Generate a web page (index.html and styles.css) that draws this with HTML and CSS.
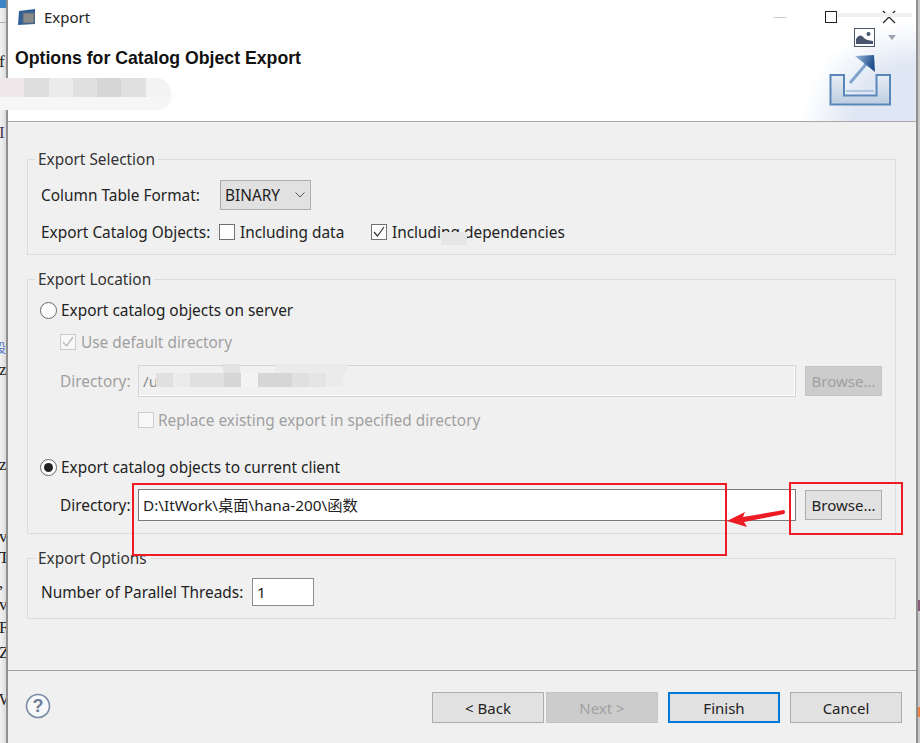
FILE: index.html
```html
<!DOCTYPE html>
<html lang="en">
<head>
    <meta charset="UTF-8">
    <meta name="viewport" content="width=device-width, initial-scale=1.0">
    <title>Export</title>
    <link rel="stylesheet" href="styles.css">
</head>
<body>
    <!-- Page behind the dialog, only a sliver is visible -->
    <div class="behind">
        <span class="scrap scrap-top"></span>
        <span class="scrap scrap-line"></span>
        <span class="glyph g1">f</span>
        <span class="glyph g2">I</span>
        <span class="glyph g12">设</span>
        <span class="glyph g3">z</span>
        <span class="glyph g4">z</span>
        <span class="glyph g5">v</span>
        <span class="glyph g6">T</span>
        <span class="glyph g7">,</span>
        <span class="glyph g8">v</span>
        <span class="glyph g9">F</span>
        <span class="glyph g10">Z</span>
        <span class="glyph g11">W</span>
    </div>

    <div class="dialog">
        <header class="banner">
            <div class="titlebar">
                <svg class="app-icon" width="18" height="18" viewBox="0 0 18 18">
                    <path d="M1 3 L17 1 V16 L0 17 Z" fill="#2f5f96"/>
                    <rect x="5" y="5" width="11" height="10" fill="#8a8a8a" stroke="#5d6a78"/>
                </svg>
                <span class="title-text">Export</span>
                <div class="win-controls">
                    <span class="win-min"></span>
                    <span class="win-max"></span>
                    <svg class="win-close" width="14" height="14" viewBox="0 0 14 14">
                        <path d="M1 1 L13 13 M13 1 L1 13" stroke="#222" stroke-width="1.2"/>
                    </svg>
                </div>
                <span class="win-blur"></span>
            </div>
            <h1 class="page-title">Options for Catalog Object Export</h1>
            <div class="banner-tools">
                <svg class="img-icon" width="21" height="19" viewBox="0 0 21 19">
                    <rect x="0.5" y="0.5" width="20" height="18" fill="#fff" stroke="#4a5568"/>
                    <path d="M2 16 V11 C5 6 8 7 10 10 C12 12 15 12 19 13 V16 Z" fill="#47566e"/>
                    <circle cx="14.5" cy="6" r="2" fill="#47566e"/>
                </svg>
                <span class="tool-arrow"></span>
            </div>
            <svg class="export-icon" width="62" height="52" viewBox="0 0 62 52">
                <defs>
                    <linearGradient id="headFill" x1="0" y1="0" x2="1" y2="0.3">
                        <stop offset="0" stop-color="#9dbbdc"/>
                        <stop offset="1" stop-color="#1f4f8c"/>
                    </linearGradient>
                    <linearGradient id="trayFill" x1="0" y1="0" x2="0" y2="1">
                        <stop offset="0" stop-color="#e8eef5"/>
                        <stop offset="1" stop-color="#bccde0"/>
                    </linearGradient>
                </defs>
                <path d="M1.5 20 H15 V40.5 H47.5 V20 H61 V49.5 H1.5 Z" fill="url(#trayFill)" stroke="#5a87ba" stroke-width="2"/>
                <path d="M17 36 H45" stroke="#7fa2c9" stroke-width="1"/>
                <path d="M21 28 L38 8" stroke="#7ea3cc" stroke-width="3"/>
                <path d="M26 1 L45 0 L46 17 Z" fill="url(#headFill)"/>
            </svg>
        </header>

        <main class="content">
            <fieldset class="group">
                <legend>Export Selection</legend>
                <div class="row row-format">
                    <span class="label label-format">Column Table Format:</span>
                    <div class="select">BINARY
                        <svg width="10" height="6" viewBox="0 0 10 6"><path d="M0.5 0.5 L5 5 L9.5 0.5" fill="none" stroke="#555"/></svg>
                    </div>
                </div>
                <div class="row row-objects">
                    <span class="label label-objects">Export Catalog Objects:</span>
                    <span class="check"></span>
                    <span class="check-text data-text">Including data</span>
                    <span class="check checked">
                        <svg width="14" height="14" viewBox="0 0 14 14"><path d="M2 7 L5.5 11 L12 2" fill="none" stroke="#333" stroke-width="1.2"/></svg>
                    </span>
                    <span class="check-text">Including dependencies</span>
                </div>
            </fieldset>

            <fieldset class="group">
                <legend>Export Location</legend>
                <div class="row row-radio1">
                    <span class="radio"></span>
                    <span class="radio-text">Export catalog objects on server</span>
                </div>
                <div class="row indent row-default muted">
                    <span class="check check-off">
                        <svg width="14" height="14" viewBox="0 0 14 14"><path d="M2 7 L5.5 11 L12 2" fill="none" stroke="#bbb" stroke-width="1.4"/></svg>
                    </span>
                    <span class="check-text">Use default directory</span>
                </div>
                <div class="row indent row-dir1 muted">
                    <span class="label label-dir">Directory:</span>
                    <div class="field field-off">/u</div>
                    <button class="btn-browse btn-off" type="button">Browse...</button>
                </div>
                <div class="row row-replace muted">
                    <span class="check check-off"></span>
                    <span class="replace-text">Replace existing export in specified directory</span>
                </div>
                <div class="row row-radio2">
                    <span class="radio on"></span>
                    <span class="radio-text">Export catalog objects to current client</span>
                </div>
                <div class="row indent row-dir2">
                    <span class="label label-dir">Directory:</span>
                    <div class="field">D:\ItWork\桌面\hana-200\函数</div>
                    <button class="btn-browse" type="button">Browse...</button>
                </div>
            </fieldset>

            <fieldset class="group">
                <legend>Export Options</legend>
                <div class="row row-threads">
                    <span class="label label-threads">Number of Parallel Threads:</span>
                    <div class="field threads">1</div>
                </div>
            </fieldset>
        </main>

        <footer class="footer">
            <svg class="help" width="26" height="26" viewBox="0 0 26 26">
                <circle cx="13" cy="13" r="11.5" fill="#f7f8fa" stroke="#7a8ba3" stroke-width="1.6"/>
                <text x="13" y="19" text-anchor="middle" class="help-mark">?</text>
            </svg>
            <div class="actions">
                <button class="btn" type="button">&lt; Back</button>
                <button class="btn btn-off next" type="button">Next &gt;</button>
                <button class="btn default" type="button">Finish</button>
                <button class="btn" type="button">Cancel</button>
            </div>
        </footer>
    </div>
    <div class="behind-right">
        <span class="speck speck-purple"></span>
        <span class="speck speck-orange"></span>
    </div>

    <!-- Mosaic patches hiding private text -->
    <div class="smudge-glow"></div>
    <div class="smudge smudge-title"><i class="a"></i><i class="b"></i><i class="c"></i><i class="d"></i><i class="e"></i><i class="d"></i><i class="g"></i></div>
    <div class="smudge smudge-path"><i class="d"></i><i class="c"></i><i class="d"></i><i class="d"></i><i class="e"></i><i class="g"></i><i class="e"></i><i class="e"></i><i class="d"></i><i class="f"></i><i class="c"></i></div>
    <div class="smudge-tail"></div>
    <div class="smudge-tail2"></div>
    <div class="smudge-dep"></div>

    <!-- Red annotations drawn on top of the screenshot -->
    <div class="mark mark-field"></div>
    <div class="mark mark-browse"></div>
    <svg class="mark-arrow" width="60" height="18" viewBox="0 0 60 18">
        <path d="M0 12 L18 3 L16 8 L57 1 Q59 3 57 5 L17 13 L20 18 Z" fill="#ed1c24"/>
    </svg>
</body>
</html>
```

FILE: styles.css
```css
html, body {
    margin: 0;
    padding: 0;
    height: 743px;
    overflow: hidden;
}
body {
    display: flex;
    position: relative;
    font-family: "Noto Sans", "Noto Sans CJK SC", sans-serif;
    font-size: 15.4px;
    color: #222;
    background-color: #f0f0f0;
}

/* sliver of the page behind */
.behind {
    width: 6px;
    flex: none;
    position: relative;
    overflow: hidden;
    background: linear-gradient(to right, #f2f2f2, #dcdcdc);
    border-right: 2px solid #8f8f8f;
}
.behind-right {
    width: 2px;
    flex: none;
    background-color: #c9c9c9;
}
.speck {
    position: absolute;
    right: 0;
    width: 2px;
}
.speck-purple {
    top: 600px;
    height: 11px;
    background-color: #8a5a7a;
}
.speck-orange {
    top: 707px;
    height: 10px;
    background-color: #f08040;
}
.scrap {
    position: absolute;
    left: 0;
    width: 6px;
}
.scrap-top {
    top: 0;
    height: 8px;
    background-color: #3d86c6;
}
.scrap-line {
    top: 22px;
    height: 1px;
    background-color: #b0b0b0;
}
.glyph {
    position: absolute;
    left: -1px;
    font-family: "Liberation Serif", serif;
    font-size: 17px;
    line-height: 18px;
    color: #222;
}
.g1 { top: 53px; }
.g2 { top: 124px; color: #4a3a5a; }
.g3 { top: 361px; }
.g4 { top: 456px; }
.g5 { top: 528px; }
.g6 { top: 549px; }
.g7 { top: 574px; }
.g8 { top: 596px; }
.g9 { top: 619px; }
.g10 { top: 644px; }
.g11 { top: 691px; }
.g12 {
    top: 339px;
    left: -6px;
    font-family: "Noto Sans CJK SC", sans-serif;
    font-size: 12px;
    color: #4a6fc0;
}

.dialog {
    flex: 1;
    min-width: 0;
    display: flex;
    flex-direction: column;
    border-right: 2px solid #8f8f8f;
}

/* header */
.banner {
    position: relative;
    height: 121px;
    flex: none;
    border-bottom: 1px solid #a8a8a8;
    background: radial-gradient(ellipse 115px 100px at 100% 100%, #dfe7f4 55%, #f5f8fc 85%, #fff 100%);
    background-color: #fff;
}
.titlebar {
    display: flex;
    align-items: center;
    height: 34px;
    padding-left: 10px;
}
.title-text {
    margin-left: 8px;
    font-size: 15px;
    color: #222;
}
.win-controls {
    position: absolute;
    top: 10px;
    right: 20px;
    display: flex;
    align-items: center;
}
.win-min {
    width: 12px;
    height: 1px;
    background-color: #ccc;
    margin-right: 39px;
}
.win-max {
    width: 10px;
    height: 10px;
    border: 1.5px solid #222;
    margin-right: 45px;
}
.win-close {
    display: block;
}
.win-blur {
    position: absolute;
    top: 13px;
    left: 830px;
    width: 74px;
    height: 4px;
    background-color: #f0f0f0;
    z-index: 0;
}
.page-title {
    margin: 14px 0 0 7px;
    font-family: "Liberation Sans", Arial, sans-serif;
    font-size: 17.7px;
    line-height: 20px;
    font-weight: bold;
    color: #111;
}
.banner-tools {
    position: absolute;
    top: 28px;
    right: 20px;
    display: flex;
    align-items: center;
}
.tool-arrow {
    width: 0;
    height: 0;
    margin-left: 13px;
    border-left: 4px solid transparent;
    border-right: 4px solid transparent;
    border-top: 5px solid #9aa3ad;
}
.export-icon {
    position: absolute;
    top: 55px;
    right: 25px;
}

/* main area */
.content {
    flex: 1;
    padding: 27px 20px 0 19px;
}
.group {
    margin: 0 0 14px 0;
    padding: 0 13px 12px 13px;
    border: 1px solid #dcdcdc;
    min-width: 0;
}
.group legend {
    margin-left: -6px;
    padding: 0 3px;
    height: 20px;
    line-height: 21px;
    color: #333;
}
.row {
    display: flex;
    align-items: center;
    height: 20px;
}
.indent {
    padding-left: 19px;
}
.muted {
    color: #a0a0a0;
}
.row-format {
    height: 30px;
    margin-top: 11px;
}
.row-objects {
    margin-top: 12px;
}
.row-radio1 {
    margin-top: 11px;
}
.row-default {
    margin-top: 12px;
}
.row-dir1 {
    height: 32px;
    margin-top: 13px;
}
.row-replace {
    margin-top: 13px;
    padding-left: 97px;
}
.row-radio2 {
    margin-top: 27px;
}
.row-dir2 {
    height: 32px;
    margin-top: 12px;
}
.row-threads {
    height: 28px;
    margin-top: 10px;
}
.label {
    flex: none;
    white-space: nowrap;
}
.label-format {
    width: 179px;
}
.label-objects {
    width: 178px;
}
.label-dir {
    width: 78px;
}
.label-threads {
    width: 211px;
}
.select {
    width: 91px;
    height: 30px;
    box-sizing: border-box;
    display: flex;
    align-items: center;
    justify-content: space-between;
    padding: 0 5px 0 4px;
    background-color: #e1e1e1;
    border: 1px solid #adadad;
    color: #222;
}
.check {
    width: 16px;
    height: 16px;
    flex: none;
    box-sizing: border-box;
    display: flex;
    align-items: center;
    justify-content: center;
    background-color: #fff;
    border: 1px solid #707070;
}
.check-off {
    border-color: #ccc;
    background-color: #f8f8f8;
}
.check-text {
    margin-left: 5px;
    white-space: nowrap;
}
.data-text {
    width: 131px;
    flex: none;
}
.replace-text {
    margin-left: 4px;
    white-space: nowrap;
}
.radio {
    width: 17px;
    height: 17px;
    flex: none;
    margin-left: -1px;
    box-sizing: border-box;
    display: flex;
    align-items: center;
    justify-content: center;
    background-color: #fff;
    border: 1.5px solid #666;
    border-radius: 50%;
}
.radio.on::after {
    content: "";
    width: 9px;
    height: 9px;
    background-color: #222;
    border-radius: 50%;
}
.radio-text {
    margin-left: 4px;
    white-space: nowrap;
}
.field {
    width: 658px;
    height: 32px;
    flex: none;
    box-sizing: border-box;
    display: flex;
    align-items: center;
    padding: 0 0 3px 4px;
    background-color: #fff;
    border: 1px solid #7a7a7a;
    color: #222;
    font-size: 15.3px;
}
.field-off {
    padding-bottom: 0;
    background-color: #f0f0f0;
    border: 1px solid #d4d4d4;
    box-shadow: inset -1px -1px 0 #fff;
    color: #8a8a8a;
}
.threads {
    width: 62px;
    height: 28px;
    padding-bottom: 0;
    border-color: #8e8e8e;
}
.btn-browse, .btn {
    box-sizing: border-box;
    font-family: inherit;
    font-size: 15px;
    color: #222;
    background-color: #e1e1e1;
    border: 1.5px solid #adadad;
    padding: 0;
}
.btn-browse {
    width: 77px;
    height: 30px;
    margin-left: 9px;
    flex: none;
}
.btn-off {
    background-color: #cccccc;
    border-color: #c4c4c4;
    color: #a0a0a0;
}

/* footer */
.footer {
    height: 73px;
    flex: none;
    box-sizing: border-box;
    display: flex;
    align-items: center;
    justify-content: space-between;
    padding: 1px 14px 0 17px;
    border-top: 1px solid #a0a0a0;
}
.help {
    margin-bottom: 3px;
}
.help-mark {
    font-family: "Liberation Sans", sans-serif;
    font-size: 18px;
    font-weight: bold;
    fill: #6f7f96;
}
.actions {
    display: flex;
}
.btn {
    width: 112px;
    height: 31px;
    margin-left: 10px;
}
.next {
    margin-left: 2px;
}
.default {
    border: 2px solid #0078d7;
}

/* overlays */
.smudge {
    position: absolute;
    display: flex;
}
.smudge i {
    display: block;
    height: 100%;
    flex: 1;
}
.smudge .a { background-color: #eee8ea; }
.smudge .b { background-color: #dedede; }
.smudge .c { background-color: #ebebeb; }
.smudge .d { background-color: #e0e0e0; }
.smudge .e { background-color: #d6d6d6; }
.smudge .f { background-color: #e4e4e4; }
.smudge .g { background-color: #f3f3f3; }
.smudge-glow {
    position: absolute;
    left: 0;
    top: 78px;
    width: 172px;
    height: 32px;
    background-color: #f6f6f6;
    border-radius: 0 40px 30px 0;
}
.smudge-title {
    left: 0;
    top: 78px;
    width: 170px;
    height: 19px;
    border-radius: 0 14px 0 0;
    overflow: hidden;
}
.smudge-path {
    left: 156px;
    top: 373px;
    width: 187px;
    height: 14px;
}
.smudge-tail {
    position: absolute;
    left: 223px;
    top: 364px;
    width: 17px;
    height: 9px;
    background-color: #e2e2e2;
}
.smudge-tail2 {
    position: absolute;
    left: 275px;
    top: 364px;
    width: 72px;
    height: 9px;
    background-color: #ebebeb;
}
.smudge-dep {
    position: absolute;
    left: 441px;
    top: 232px;
    width: 26px;
    height: 13px;
    background-color: #e6e6e6;
}
.mark {
    position: absolute;
    box-sizing: border-box;
    border: 2px solid #ed1c24;
}
.mark-field {
    left: 132px;
    top: 483px;
    width: 595px;
    height: 73px;
}
.mark-browse {
    left: 789px;
    top: 482px;
    width: 114px;
    height: 53px;
}
.mark-arrow {
    position: absolute;
    left: 727px;
    top: 509px;
}
```
